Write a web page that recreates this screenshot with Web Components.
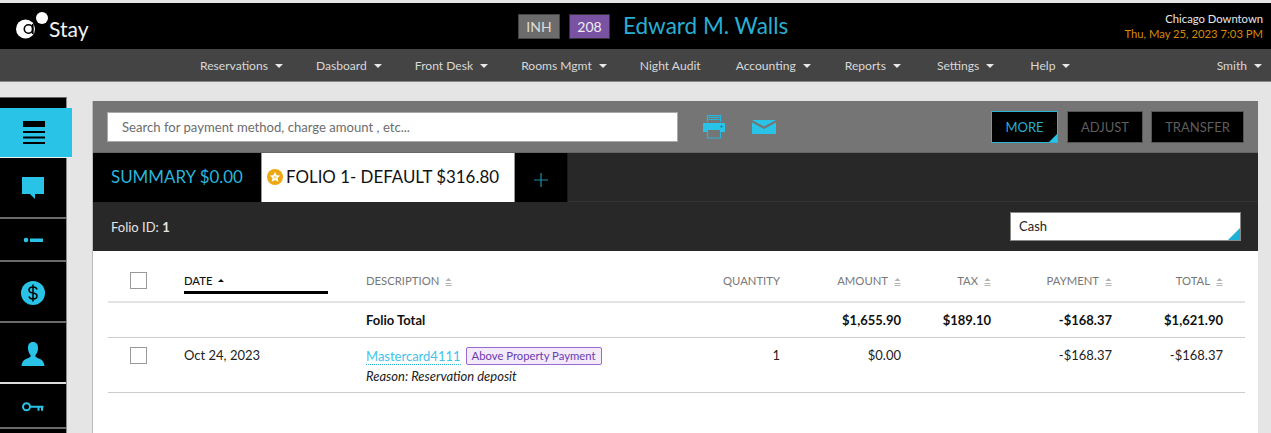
<!DOCTYPE html>
<html lang="en"><head><meta charset="utf-8"><title>Folio</title>
<style>
html,body{margin:0;height:433px;overflow:hidden;background:#e5e5e5;font-family:Lato,"Open Sans",sans-serif;color:#222}
stay-app{display:block}
</style></head><body>
<stay-app></stay-app>
<script>
const CY='#29c3e8';
function el(name,html){customElements.define(name,class extends HTMLElement{constructor(){super();this.attachShadow({mode:'open'}).innerHTML=html;}});}

el('stay-header',`<style>
:host{display:grid;grid-template-columns:518px auto 1fr;align-items:center;height:46px;margin-top:3px;background:#000;color:#fff}
.logo{display:flex;align-items:center;padding-left:16px;font-size:21px;line-height:1;color:#f2f2f2}
.logo svg{display:block;margin-right:-1px}
.logo span{margin-top:5px}
.mid{display:flex;align-items:center}
.b{box-sizing:border-box;height:25px;display:flex;align-items:center;justify-content:center;font-size:14px;border:1px solid #444}
.inh{width:42px;background:#6c6c6c;color:#ddd;margin-right:9px}
.rm{width:41px;background:#7a52a3;color:#eee;border-color:#333;margin-right:13px}
.name{font-size:22.500px;color:#29aed3;line-height:1}
.r{text-align:right;padding-right:8px;font-size:11.250px;line-height:15px}
.r i{font-style:normal;display:block;color:#e8e8e8}
.r b{font-weight:400;display:block;color:#d98a0a}
</style>
<div class="logo"><svg width="34" height="30" viewBox="0 0 34 30"><circle cx="9.500" cy="18" r="9.500" fill="#fff"/><circle cx="26" cy="7" r="6" fill="#fff"/><circle cx="12.500" cy="18" r="4.200" fill="none" stroke="#000" stroke-width="1.600"/><path d="M16.700 13v10" stroke="#000" stroke-width="1.800"/></svg><span>Stay</span></div>
<div class="mid"><div class="b inh">INH</div><div class="b rm">208</div><div class="name">Edward M. Walls</div></div>
<div class="r"><i>Chicago Downtown</i><b>Thu, May 25, 2023 7:03 PM</b></div>`);

el('nav-item',`<style>
:host{display:flex;align-items:center;font-size:12.100px;color:#d8d8d8;white-space:nowrap}
.c{width:0;height:0;border:4px solid transparent;border-top-color:#e8e8e8;border-bottom:0;margin-left:7px;margin-top:2px}
:host([plain]) .c{display:none}
</style><slot></slot><span class="c"></span>`);

el('stay-nav',`<style>
:host{display:flex;height:32px;box-sizing:content-box;background:#444;border-bottom:1px solid #888;padding-left:200px;padding-right:9px;gap:33px}
.sp{flex:1}
</style>
<nav-item>Reservations</nav-item><nav-item>Dasboard</nav-item><nav-item>Front Desk</nav-item><nav-item>Rooms Mgmt</nav-item><nav-item plain>Night Audit</nav-item><nav-item style="margin-left:2px">Accounting</nav-item><nav-item style="margin-left:1px">Reports</nav-item><nav-item style="margin-left:3px">Settings</nav-item><nav-item style="margin-left:3px">Help</nav-item><div class="sp"></div><nav-item>Smith</nav-item>`);

el('rail-item',`<style>
:host{display:flex;align-items:center;justify-content:center;box-sizing:border-box;border-bottom:2px solid #6a6a6a;background:#000}
:host([active]){background:${CY};width:72px;color:#000;border-bottom:1px solid #eee;padding-right:5px}
:host([light]){border-bottom-color:#ddd}
</style><slot></slot>`);

el('side-rail',`<style>
:host{display:block;width:66px;flex:none;margin-top:15px;padding-top:10px;height:330px;background:#000;border-right:1px solid #888;border-top:1px solid #666}
svg{display:block}
</style>
<rail-item active style="height:50px"><svg width="24" height="24" viewBox="0 0 24 24"><path d="M1 0h22v6H1zM1 10h22v2H1zM1 15.500h22v2H1zM1 21h22v2H1z"/></svg></rail-item>
<rail-item style="height:61px"><svg width="24" height="24" viewBox="0 0 24 24" fill="${CY}"><path d="M1 1h22v17h-8l-5 5v-5H1z" transform="matrix(-1 0 0 1 24 0)"/></svg></rail-item>
<rail-item style="height:43px"><svg width="24" height="8" viewBox="0 0 24 8" fill="${CY}"><circle cx="5" cy="4" r="2.300"/><rect x="9" y="2.500" width="13" height="3.500"/></svg></rail-item>
<rail-item style="height:61px;padding-top:2px"><svg width="24" height="24" viewBox="0 0 24 24"><circle cx="12" cy="12" r="12" fill="${CY}"/><path d="M16 8.500c-.5-2-2-2.500-4-2.500s-4 1-4 3 2 2.700 4 3 4 1 4 3-2 3-4 3-3.500-.8-4-2.500M12 3.500v17" fill="none" stroke="#000" stroke-width="1.500"/></svg></rail-item>
<rail-item light style="height:61px;padding-top:2px"><svg width="24" height="24" viewBox="0 0 24 24" fill="${CY}"><path d="M12 0c3.500 0 5 2.500 5 6 0 3-1 5.500-2.500 7-.5 1 0 2 1.500 2.700 3 1.200 7 2.300 7.500 8.300H.5c.5-6 4.500-7.100 7.500-8.300 1.500-.7 2-1.700 1.500-2.700C8 11.500 7 9 7 6c0-3.500 1.500-6 5-6z"/></svg></rail-item>
<rail-item style="height:45px;padding-top:3px"><svg width="22" height="10" viewBox="0 0 22 10"><circle cx="4.500" cy="4.800" r="3.500" fill="none" stroke="${CY}" stroke-width="2"/><path d="M8 3.800h13.500v2H21v3h-2v-3h-1.500v3h-2v-3H8z" fill="${CY}"/></svg></rail-item>
<rail-item style="height:20px;border-bottom:0"></rail-item>`);

el('act-btn',`<style>
:host{display:flex;align-items:center;justify-content:center;box-sizing:border-box;height:32px;background:#000;border:1px solid #555;color:#5e5e5e;font-size:13px;position:relative}
:host([on]){border-color:#29b5da;color:#29aed3}
:host([on])::after{content:"";position:absolute;right:0;bottom:0;border-style:solid;border-width:0 0 8px 8px;border-color:transparent transparent #29c3e8 transparent}
</style><slot></slot>`);

el('folio-toolbar',`<style>
:host{display:flex;align-items:center;height:51px;background:#757575;padding-left:14px;padding-right:14px;border-bottom:1px solid #666}
.s{box-sizing:border-box;width:571px;height:30px;background:#fff;border:1px solid #aaa;display:flex;align-items:center;padding-left:14px;font-size:13.100px;color:#6d6d6d}
svg{display:block}
.p{margin-left:25px}
.m{margin-left:27px}
.sp{flex:1}
</style>
<div class="s">Search for payment method, charge amount , etc...</div>
<svg class="p" width="22" height="24" viewBox="0 0 22 24"><path d="M4.500 7V.7h13V7M4.500 17v6h13v-6" fill="none" stroke="#29b5da" stroke-width="1.200"/><path d="M5.500 2.500h11M5.500 4.500h11" stroke="#29b5da"/><path d="M1 8h20a1 1 0 0 1 1 1v8h-5v-2H5v2H0V9a1 1 0 0 1 1-1z" fill="${CY}"/><circle cx="18.500" cy="11.500" r="1" fill="#1b6f86"/></svg>
<svg class="m" width="24" height="14" viewBox="0 0 24 14" fill="${CY}"><path d="M0 0h24l-12 6.500zM0 2.500l12 6.500 12-6.500V14H0z"/></svg>
<div class="sp"></div>
<act-btn on style="width:67px;margin-right:9px">MORE</act-btn>
<act-btn style="width:76px;margin-right:8px">ADJUST</act-btn>
<act-btn style="width:93px">TRANSFER</act-btn>`);

el('folio-tabs',`<style>
:host{display:flex;height:49px;background:#282828;font-size:16.900px;box-sizing:border-box}
.t{display:flex;align-items:center;box-sizing:border-box;padding-bottom:2px}
.sum{width:168px;background:#000;color:#29b5da;padding-left:18px}
.fol{width:254px;background:#fff;color:#111;border-left:1px solid #999;border-right:1px solid #999;padding-left:5px}
.fol svg{display:block;margin-right:3px}
.add{width:53px;background:#000;border-right:1px solid #1a1a1a;justify-content:center;padding:5px 0 0}
.rest{flex:1;border-bottom:1px solid #333}
</style>
<div class="t sum">SUMMARY $0.00</div>
<div class="t fol"><svg width="16" height="16" viewBox="0 0 16 16"><circle cx="8" cy="8" r="8" fill="#eda70f"/><path d="M8 2.800l1.600 3.400 3.700.4-2.800 2.500.8 3.700L8 10.900l-3.300 1.900.8-3.700-2.800-2.500 3.700-.4z" fill="#fff"/><circle cx="8" cy="8.300" r="1.400" fill="#f7d68a"/></svg>FOLIO 1- DEFAULT $316.80</div>
<div class="t add"><svg width="14" height="14" viewBox="0 0 14 14"><path d="M7 0v14M0 7h14" stroke="#1f8cab" stroke-width="1.200"/></svg></div>
<div class="rest"></div>`);

el('folio-bar',`<style>
:host{display:flex;align-items:center;justify-content:space-between;height:49px;background:#282828;padding:0 17px 0 18px;color:#e4e4e4;font-size:13px}
b{font-weight:700}
.sel{position:relative;box-sizing:border-box;width:231px;height:29px;background:#fff;border:1px solid #888;color:#222;display:flex;align-items:center;padding:0 0 1px 8px}
.sel::after{content:"";position:absolute;right:0;bottom:0;border-style:solid;border-width:0 0 12px 12px;border-color:transparent transparent #1fb0d8 transparent}
</style><div>Folio ID: <b>1</b></div><div class="sel">Cash</div>`);

el('sort-mark',`<style>
:host{display:inline-block;margin-left:6px;vertical-align:middle}
svg{display:block}
</style><svg width="7" height="8" viewBox="0 0 7 8" fill="#b5b5b5"><path d="M3.500 0l3 3h-6zM.5 5h6v1h-6zM.5 7h6v1h-6z"/></svg>`);

el('cell-box',`<style>
:host{display:block;box-sizing:border-box;width:17px;height:17px;border:1.500px solid #999;background:#fff;margin-left:22px}
</style>`);

el('folio-table',`<style>
:host{display:block;background:#fff;padding:0 13px 0 15px;height:200px;font-size:13px;color:#222}
.r{display:grid;grid-template-columns:76px 182px 300px 114px 121px 90px 121px 111px 22px;width:1137px}
.h{height:52px;align-items:start;padding-top:22px;box-sizing:border-box;font-size:11.300px;color:#777;border-bottom:2px solid #e4e4e4}
.h>*{line-height:15px}
.n{text-align:right}
.dt{color:#111;font-weight:500}
.dt .u{display:block;width:144px;height:3px;background:#000;margin-top:3px}
.dt .c{display:inline-block;width:0;height:0;border:3.500px solid transparent;border-bottom-color:#111;border-top:0;margin-left:5px;vertical-align:3px}
.t{height:34px;align-items:center;font-weight:700;color:#111;border-bottom:1px solid #ccc}
.d{height:55px;padding-top:9px;box-sizing:border-box;border-bottom:1px solid #ccc;line-height:17px}
.a{color:#43c2ea;border-bottom:1px dotted #29b5da}
.tag{display:inline-block;box-sizing:border-box;height:18px;line-height:16px;border:1px solid #9a6ad0;background:#f3eafa;color:#6a3bb0;font-size:11.300px;padding:0 5px;border-radius:2px;margin-left:5px;vertical-align:1px}
.re{font-style:italic;font-size:13px;display:block;margin-top:3px;line-height:16px}
cell-box{margin-top:-1px}
</style>
<div class="r h"><cell-box></cell-box><div class="dt">DATE<span class="c"></span><span class="u"></span></div><div>DESCRIPTION<sort-mark></sort-mark></div><div class="n">QUANTITY</div><div class="n">AMOUNT<sort-mark></sort-mark></div><div class="n">TAX<sort-mark></sort-mark></div><div class="n">PAYMENT<sort-mark></sort-mark></div><div class="n">TOTAL<sort-mark></sort-mark></div><div></div></div>
<div class="r t"><div></div><div></div><div>Folio Total</div><div></div><div class="n">$1,655.90</div><div class="n">$189.10</div><div class="n">-$168.37</div><div class="n">$1,621.90</div><div></div></div>
<div class="r d"><cell-box style="margin-top:0"></cell-box><div>Oct 24, 2023</div><div><span class="a">Mastercard4111</span><span class="tag">Above Property Payment</span><span class="re">Reason: Reservation deposit</span></div><div class="n">1</div><div class="n">$0.00</div><div class="n"></div><div class="n">-$168.37</div><div class="n">-$168.37</div><div></div></div>`);

el('folio-panel',`<style>
:host{display:block;width:1166px;margin:19px 0 0 25px;border-left:1px solid #bbb;box-sizing:border-box}
</style><folio-toolbar></folio-toolbar><folio-tabs></folio-tabs><folio-bar></folio-bar><folio-table></folio-table>`);

el('stay-app',`<style>
:host{display:block}
.b{display:flex;align-items:flex-start}
</style><stay-header></stay-header><stay-nav></stay-nav><div class="b"><side-rail></side-rail><folio-panel></folio-panel></div>`);
</script>
</body></html>
